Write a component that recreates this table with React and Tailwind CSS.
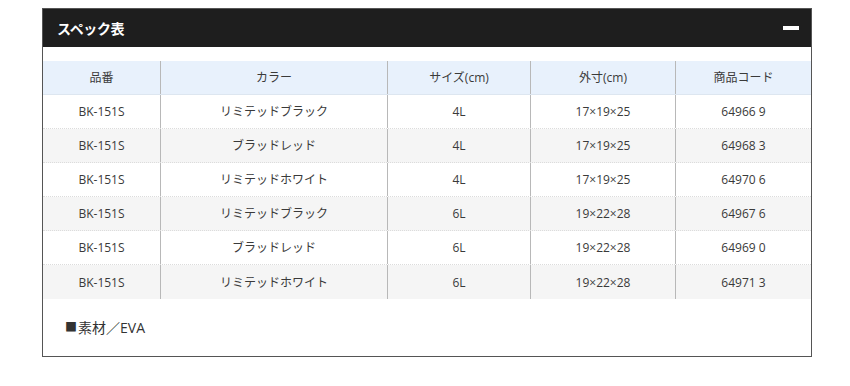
import React from 'react';

const rows = [
  ['BK-151S', 'リミテッドブラック', '4L', '17×19×25', '64966 9'],
  ['BK-151S', 'ブラッドレッド', '4L', '17×19×25', '64968 3'],
  ['BK-151S', 'リミテッドホワイト', '4L', '17×19×25', '64970 6'],
  ['BK-151S', 'リミテッドブラック', '6L', '19×22×28', '64967 6'],
  ['BK-151S', 'ブラッドレッド', '6L', '19×22×28', '64969 0'],
  ['BK-151S', 'リミテッドホワイト', '6L', '19×22×28', '64971 3'],
];

const widths = ['w-[118px]', 'w-[227px]', 'w-[143px]', 'w-[145px]', 'w-[135px]'];

const font = { fontFamily: '"Open Sans", "Noto Sans CJK JP", sans-serif' };

const App = () => {
  return (
    <div className="min-h-screen bg-white pt-[8px] pl-[42px]" style={font}>
      <div className="w-[770px] border border-[#555] bg-white">
        {/* Header */}
        <div className="h-[38px] bg-[#1e1e1e] flex items-center justify-between pl-[14px] pr-[12px]">
          <span className="text-white text-[14px] font-bold tracking-tight">スペック表</span>
          <span className="block w-[16px] h-[4px] bg-white" />
        </div>

        {/* Table */}
        <div className="pt-[14px]">
          <div className="flex h-[34px] bg-[#e8f1fc] border-b border-[#dde6f0]">
            {['品番', 'カラー', 'サイズ(cm)', '外寸(cm)', '商品コード'].map((h, i) => (
              <div
                key={h}
                className={`${widths[i]} flex items-center justify-center text-[12px] text-[#3a3a3a] ${i < 4 ? 'border-r border-[#b8b8b8]' : ''}`}
              >
                {h}
              </div>
            ))}
          </div>
          {rows.map((row, r) => (
            <div
              key={r}
              className={`flex h-[34px] ${r % 2 === 1 ? 'bg-[#f5f5f5]' : 'bg-white'} ${r < rows.length - 1 ? 'border-b border-dotted border-[#dcdcdc]' : ''}`}
            >
              {row.map((c, i) => (
                <div
                  key={i}
                  className={`${widths[i]} flex items-center justify-center text-[12px] text-[#3a3a3a] pt-[1px] ${i < 4 ? 'border-r border-[#b8b8b8]' : ''}`}
                >
                  {c}
                </div>
              ))}
            </div>
          ))}
        </div>

        {/* Material */}
        <div className="h-[57px] flex items-center pl-[22px] text-[14px] text-[#333]">
          <span className="text-[12px] mr-[1px]">■</span>素材／EVA
        </div>
      </div>
    </div>
  );
};

export default App;
